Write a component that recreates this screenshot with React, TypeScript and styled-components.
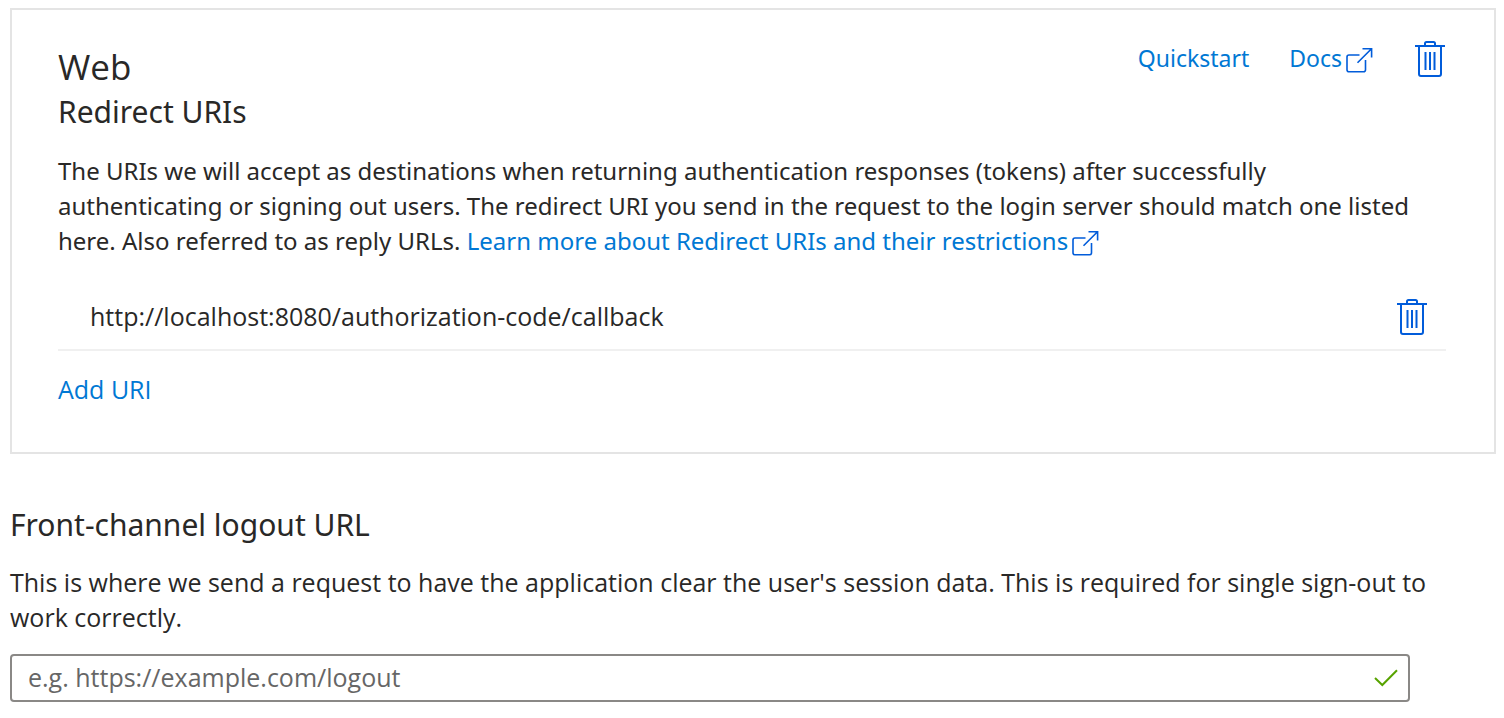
import React from "react";
import styled, { createGlobalStyle } from "styled-components";

const compactFont = `"Noto Sans", "Open Sans", sans-serif`;

const Global = createGlobalStyle`
  * { box-sizing: border-box; }
  body {
    margin: 0;
    background: #fff;
    color: #292827;
    font-family: "Open Sans", "Noto Sans", sans-serif;
    font-size: 25px;
    line-height: 35px;
  }
  h2, h3, p, ul { margin: 0; padding: 0; font-weight: 400; }
`;

const Page = styled.main`
  padding: 8px 8px 16px 10px;
`;

const Card = styled.section`
  border: 2px solid #e4e4e4;
  padding: 29px 48px 45px 46px;
`;

const CardHeader = styled.header`
  display: flex;
  justify-content: space-between;
  align-items: flex-start;
`;

const Title = styled.h2`
  font-size: 35px;
  line-height: 48px;
  padding-top: 4px;
`;

const Subtitle = styled.h3`
  display: block;
  font-family: ${compactFont};
  font-size: 30px;
  line-height: 42px;
`;

const Actions = styled.nav`
  display: flex;
  align-items: center;
  gap: 40px;
  font-family: ${compactFont};
  font-size: 23px;
`;

const Link = styled.a`
  color: #0078d4;
  text-decoration: none;
`;

const Paragraph = styled.p`
  margin-top: 20px;
`;

const CardText = styled(Paragraph)`
  padding-right: 16px;
  font-family: ${compactFont};
  font-size: 24px;
`;

const UriList = styled.ul`
  list-style: none;
  margin-top: 25px;
`;

const UriRow = styled.li`
  display: flex;
  justify-content: space-between;
  align-items: center;
  height: 68px;
  padding: 0 18px 0 32px;
  border-bottom: 2px solid #f0f0f0;
`;

const IconButton = styled.button`
  display: flex;
  padding: 0;
  border: 0;
  background: none;
  cursor: pointer;
`;

const AddButton = styled.button`
  display: block;
  margin-top: 21px;
  padding: 0;
  border: 0;
  background: none;
  color: #0078d4;
  font: inherit;
  cursor: pointer;
`;

const LogoutSection = styled.section`
  margin-top: 50px;
`;

const LogoutText = styled(Paragraph)`
  margin-top: 19px;
  padding-right: 58px;
`;

const Field = styled.div`
  display: flex;
  align-items: center;
  height: 48px;
  margin: 19px 86px 0 0;
  padding: 0 10px 0 16px;
  border: 2px solid #8a8886;
  border-radius: 4px;
`;

const TextInput = styled.input`
  flex: 1;
  min-width: 0;
  padding: 0 0 2px;
  border: 0;
  outline: 0;
  background: none;
  color: inherit;
  font: inherit;
  &::placeholder { color: #666; opacity: 1; }
`;

const InlineIcon = styled.svg`
  margin-left: 4px;
  vertical-align: -6px;
`;

const ExternalIcon = () => (
  <InlineIcon width="29" height="26" viewBox="0 0 29 26" fill="none" stroke="#015cda" strokeWidth="1.6" aria-hidden="true">
    <path d="M13.5 8H3Q1 8 1 10V22.8Q1 24.8 3 24.8H17.5Q19.5 24.8 19.5 22.8V13" />
    <path d="M11.5 15.8 25.5 1.8M16.5 1.8H25.6V10.6" />
  </InlineIcon>
);

const TrashIcon = () => (
  <svg width="31" height="38" viewBox="0 -2 31 38" fill="none" stroke="#015cda" aria-hidden="true">
    <path strokeWidth="2" d="M0 5H30M10 5V2.5Q10 1 11.5 1H18.5Q20 1 20 2.5V5" />
    <path strokeWidth="2" d="M4 6V33Q4 35 6 35H24Q26 35 26 33V6" />
    <path strokeWidth="2" d="M10.5 11V29M15 11V29M19.5 11V29" />
  </svg>
);

const CheckIcon = () => (
  <svg width="24" height="18" viewBox="0 0 24 18" fill="none" stroke="#57a300" strokeWidth="2" aria-hidden="true">
    <path d="M1 9 8.3 16 23 1.2" />
  </svg>
);

export default function App() {
  return (
    <>
      <Global />
      <Page>
        <Card>
          <CardHeader>
            <div>
              <Title>Web</Title>
              <Subtitle>Redirect URIs</Subtitle>
            </div>
            <Actions>
              <Link href="#quickstart">Quickstart</Link>
              <Link href="#docs">
                Docs
                <ExternalIcon />
              </Link>
              <IconButton type="button" aria-label="Delete platform">
                <TrashIcon />
              </IconButton>
            </Actions>
          </CardHeader>
          <CardText>
            The URIs we will accept as destinations when returning authentication responses (tokens) after successfully
            authenticating or signing out users. The redirect URI you send in the request to the login server should
            match one listed here. Also referred to as reply URLs.{" "}
            <Link href="#restrictions">
              Learn more about Redirect URIs and their restrictions
              <ExternalIcon />
            </Link>
          </CardText>
          <UriList>
            <UriRow>
              http://localhost:8080/authorization-code/callback
              <IconButton type="button" aria-label="Delete URI">
                <TrashIcon />
              </IconButton>
            </UriRow>
          </UriList>
          <AddButton type="button">Add URI</AddButton>
        </Card>
        <LogoutSection>
          <Subtitle as="label" htmlFor="logout-url">
            Front-channel logout URL
          </Subtitle>
          <LogoutText>
            This is where we send a request to have the application clear the user's session data. This is required for
            single sign-out to work correctly.
          </LogoutText>
          <Field>
            <TextInput id="logout-url" type="url" placeholder="e.g. https://example.com/logout" />
            <CheckIcon />
          </Field>
        </LogoutSection>
      </Page>
    </>
  );
}
